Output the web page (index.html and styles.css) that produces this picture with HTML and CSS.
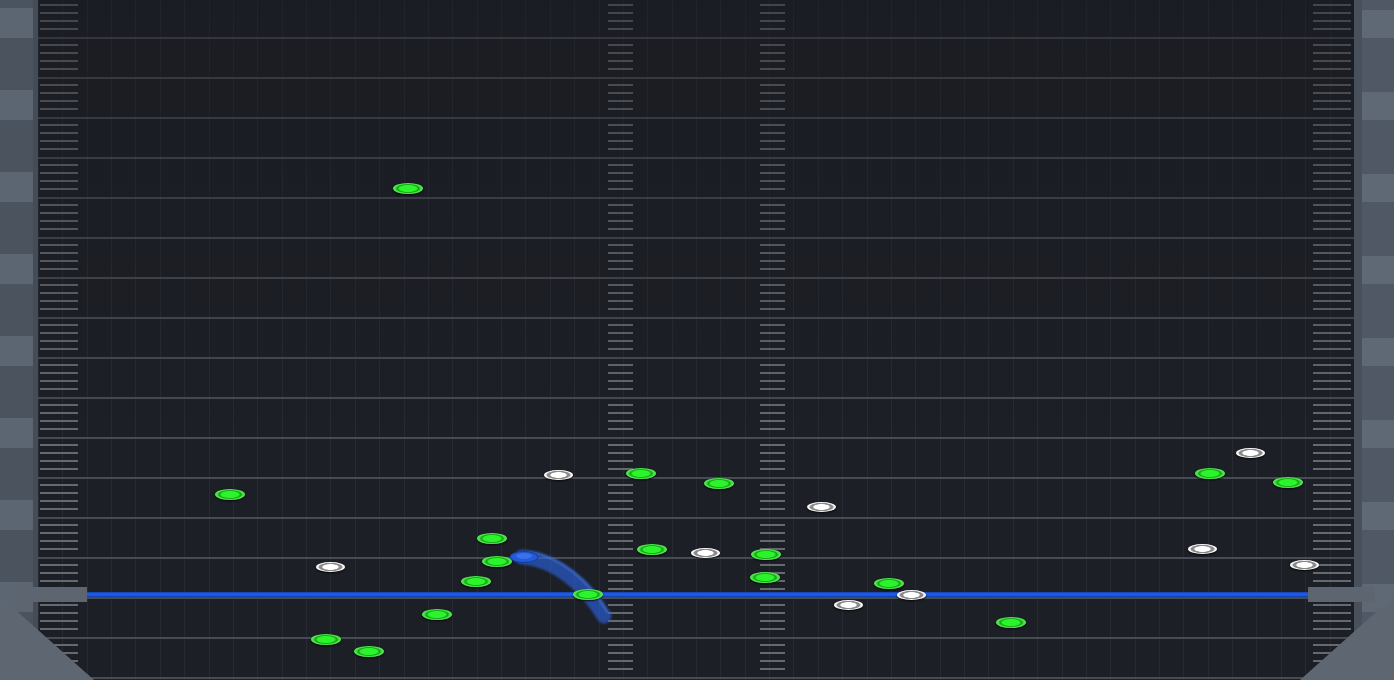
FILE: index.html
```html
<!DOCTYPE html>
<html lang="en">
<head>
<meta charset="utf-8">
<title>Chart lane</title>
<link rel="stylesheet" href="styles.css">
</head>
<body>
<div class="stage">
  <div class="wall wall-left"></div>
  <div class="lane">
    <div class="ticks ticks-edge"></div>
    <div class="gap gap-a"></div>
    <div class="ticks ticks-mid"></div>
    <div class="gap gap-b"></div>
    <div class="ticks ticks-mid"></div>
    <div class="gap gap-c"></div>
    <div class="ticks ticks-edge"></div>
  </div>
  <div class="wall wall-right"></div>

  <div class="corner corner-left"></div>
  <div class="corner corner-right"></div>

  <div class="judge">
    <div class="slab slab-left"></div>
    <div class="judge-line"></div>
    <div class="slab slab-right"></div>
  </div>

  <svg class="slide" width="1394" height="680" viewBox="0 0 1394 680">
    <path class="trail" d="M 522 557 C 556 559, 586 586, 604 616" fill="none" stroke="rgba(44,102,228,0.62)" stroke-width="15" stroke-linecap="round"/>
    <path d="M 528 552 C 560 556, 590 582, 607 612" fill="none" stroke="rgba(100,150,245,0.22)" stroke-width="3" stroke-linecap="round"/>
    <ellipse cx="524" cy="557" rx="14" ry="5.5" fill="#2459d8" stroke="#163c9c" stroke-width="1"/>
    <ellipse cx="524" cy="556" rx="8" ry="3" fill="#3a70ec"/>
  </svg>

  <div class="notes">
    <div class="note g" style="left:408px;top:188px"></div>
    <div class="note g" style="left:230px;top:494px"></div>
    <div class="note g" style="left:641px;top:473px"></div>
    <div class="note g" style="left:719px;top:483px"></div>
    <div class="note g" style="left:492px;top:538px"></div>
    <div class="note g" style="left:497px;top:561px"></div>
    <div class="note g" style="left:476px;top:581px"></div>
    <div class="note g" style="left:437px;top:614px"></div>
    <div class="note g" style="left:326px;top:639px"></div>
    <div class="note g" style="left:369px;top:651px"></div>
    <div class="note g" style="left:588px;top:594px"></div>
    <div class="note g" style="left:652px;top:549px"></div>
    <div class="note g" style="left:766px;top:554px"></div>
    <div class="note g" style="left:765px;top:577px"></div>
    <div class="note g" style="left:889px;top:583px"></div>
    <div class="note g" style="left:1011px;top:622px"></div>
    <div class="note g" style="left:1210px;top:473px"></div>
    <div class="note g" style="left:1288px;top:482px"></div>

    <div class="note w" style="left:558px;top:475px"></div>
    <div class="note w" style="left:330px;top:567px"></div>
    <div class="note w" style="left:705px;top:553px"></div>
    <div class="note w" style="left:821px;top:507px"></div>
    <div class="note w" style="left:848px;top:605px"></div>
    <div class="note w" style="left:911px;top:595px"></div>
    <div class="note w" style="left:1250px;top:453px"></div>
    <div class="note w" style="left:1202px;top:549px"></div>
    <div class="note w" style="left:1304px;top:565px"></div>
  </div>
</div>
</body>
</html>
```

FILE: styles.css
```css
* { box-sizing: border-box; }

html, body {
  margin: 0;
  padding: 0;
  background: #1d1f26;
  overflow: hidden;
  font-family: "Liberation Sans", Arial, sans-serif;
}

.stage {
  position: relative;
  width: 1394px;
  height: 680px;
  display: flex;
  overflow: hidden;
}

/* side walls */
.wall {
  height: 100%;
  flex: none;
}

.wall-left {
  width: 38px;
  background-color: #4a535e;
  background-image:
    linear-gradient(to right, transparent 0 33px, #444c57 33px),
    repeating-linear-gradient(to bottom, transparent 0 8px, #5c6672 8px 38px, transparent 38px 82px);
  background-size: 100% 100%, 33px 100%;
  background-repeat: no-repeat;
}

.wall-right {
  width: 40px;
  background-color: #4f5864;
  background-image:
    linear-gradient(to right, #48505b 0 8px, transparent 8px),
    repeating-linear-gradient(to bottom, transparent 0 10px, #5f6976 10px 38px, transparent 38px 82px);
  background-size: 100% 100%, 32px 100%;
  background-position: 0 0, 8px 0;
  background-repeat: no-repeat;
}

/* main lane */
.lane {
  position: relative;
  flex: 1;
  height: 100%;
  display: flex;
  background-color: #1d1f26;
  background-image:
    repeating-linear-gradient(to bottom, transparent 0 37px, #474b54 37px 39px, transparent 39px 40px),
    repeating-linear-gradient(to right, #272a31 0 1px, transparent 1px 24.37px);
}

.lane::after {
  content: "";
  position: absolute;
  inset: 0;
  background: linear-gradient(to bottom, rgba(24, 26, 32, 0.45) 0%, rgba(24, 26, 32, 0.18) 45%, rgba(24, 26, 32, 0) 65%);
  pointer-events: none;
}

.ticks {
  flex: none;
  height: 100%;
  background-image:
    repeating-linear-gradient(to bottom,
      transparent 0 4px, #656970 4px 6px,
      transparent 6px 12px, #656970 12px 14px,
      transparent 14px 20px, #656970 20px 22px,
      transparent 22px 28px, #656970 28px 30px,
      transparent 30px 40px);
}

.ticks-edge { width: 38px; }
.ticks-mid { width: 25px; }

.ticks-edge:first-child { margin-left: 2px; }

.gap { flex: none; height: 100%; }
.gap-a { width: 530px; }
.gap-b { width: 127px; }
.gap-c { width: 528px; }

/* bottom corners */
.corner {
  position: absolute;
  top: 596px;
  width: 94px;
  height: 84px;
  background: #5e6771;
}

.corner-left {
  left: 0;
  clip-path: polygon(0 0, 100% 100%, 0 100%);
}

.corner-right {
  right: 0;
  clip-path: polygon(100% 0, 100% 100%, 0 100%);
}

/* judgement line */
.judge {
  position: absolute;
  left: 18px;
  top: 587px;
  width: 1357px;
  height: 15px;
  display: flex;
  align-items: center;
}

.slab {
  flex: none;
  width: 69px;
  height: 15px;
  background: #5d6670;
}

.slab-right { width: 67px; }

.judge-line {
  flex: 1;
  height: 5px;
  background: linear-gradient(to bottom, #1440b0 0, #2260e6 40%, #1d56d8 70%, #1238a0 100%);
}

.slide {
  position: absolute;
  left: 0;
  top: 0;
}

.trail {
  filter: blur(0.8px);
}

/* notes */
.notes {
  position: absolute;
  inset: 0;
}

.note {
  position: absolute;
  border-radius: 50%;
}

.note.g {
  width: 30px;
  height: 11px;
  margin: -5.5px 0 0 -15px;
  background: radial-gradient(ellipse at center,
    #2cf42c 0 40%,
    #14a014 50%,
    #4ce84c 62% 74%,
    #1f9a1f 86%,
    #0a4a0a 100%);
  box-shadow: 0 1px 2px rgba(0, 0, 0, 0.8);
}

.note.w {
  width: 29px;
  height: 10px;
  margin: -5px 0 0 -14.5px;
  background: radial-gradient(ellipse at center,
    #ffffff 0 36%,
    #8a8a8a 44% 54%,
    #f6f6f6 62% 86%,
    #7a7a7a 100%);
  box-shadow: 0 1px 2px rgba(0, 0, 0, 0.8);
}
```
